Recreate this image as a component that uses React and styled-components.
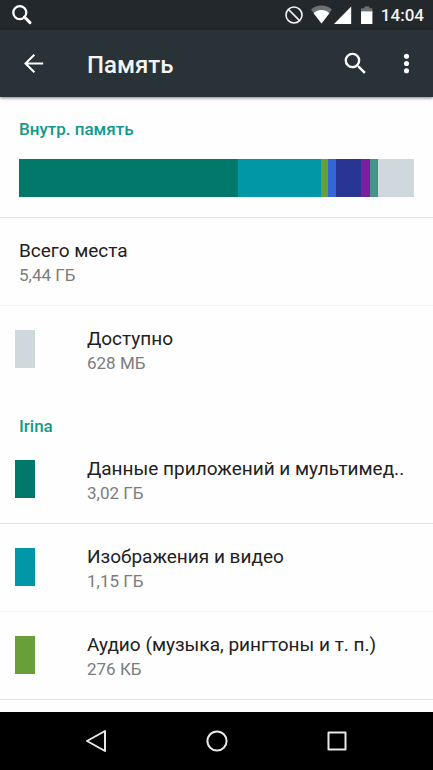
import React from "react";
import styled, { createGlobalStyle } from "styled-components";

const GlobalStyle = createGlobalStyle`
  * {
    box-sizing: border-box;
  }
  body {
    margin: 0;
    background-color: #fefefe;
    font-family: Roboto, "Noto Sans", sans-serif;
  }
`;

const Screen = styled.div`
  display: flex;
  flex-direction: column;
  height: 100vh;
  overflow: hidden;
`;

const StatusBar = styled.div`
  display: flex;
  flex: none;
  align-items: center;
  justify-content: space-between;
  height: 30px;
  padding: 0 9px 0 11px;
  background-color: #22282b;
  color: #ffffff;

  svg {
    display: block;
  }
`;

const StatusIcons = styled.div`
  display: flex;
  align-items: center;
`;

const Clock = styled.time`
  margin-left: 8px;
  font-size: 17px;
  font-weight: 500;
  line-height: 24px;
  color: #f2f2f2;
`;

const Toolbar = styled.header`
  display: flex;
  flex: none;
  align-items: center;
  height: 67px;
  padding: 0 12px 0 19px;
  background-color: #283237;
  color: #ffffff;
  box-shadow: 0 1px 3px rgba(0, 0, 0, 0.5);
  z-index: 1;
`;

const Title = styled.h1`
  flex: 1;
  margin: 0 0 0 39px;
  padding-top: 3px;
  font-size: 24px;
  font-weight: 500;
  line-height: 32px;
  color: #f4f5f5;
`;

const IconButton = styled.button`
  display: flex;
  padding: 0;
  border: none;
  background: none;
  color: inherit;
  cursor: pointer;

  & + & {
    margin-left: 22px;
  }

  svg {
    width: 29px;
    height: 29px;
    fill: currentColor;
  }
`;

const Content = styled.main`
  flex: 1;
  min-height: 0;
  overflow: hidden auto;
  scrollbar-width: none;
`;

const Category = styled.h2`
  margin: 0;
  padding: 22px 19px 0;
  font-size: 17px;
  font-weight: 500;
  line-height: 20px;
  color: #109a8c;
`;

const Usage = styled.div`
  padding: 20px 19px;
  border-bottom: 1px solid #e4e4e4;
`;

const UsageBar = styled.div`
  display: flex;
  height: 38px;
`;

const Segment = styled.div`
  flex: ${(props) => props.$size} 0 0;
  background-color: ${(props) => props.$color};
`;

const List = styled.ul`
  margin: 0;
  padding: 0;
  list-style: none;
`;

const Row = styled.li`
  display: flex;
  align-items: flex-start;
  height: 88px;
  padding: 21px 19px 0 ${(props) => (props.$swatch ? 15 : 19)}px;
  border-bottom: 1px solid
    ${(props) => ({ none: "transparent", light: "#f3f3f3" })[props.$line] || "#e4e4e4"};
`;

const Swatch = styled.div`
  flex: none;
  width: 20px;
  height: 38px;
  margin: 3px 52px 0 0;
  background-color: ${(props) => props.$color};
`;

const Name = styled.div`
  font-size: 19px;
  line-height: 24px;
  color: #212121;
  white-space: nowrap;
`;

const Size = styled.div`
  font-size: 17px;
  line-height: 24px;
  color: #7c7c7c;
`;

const NavBar = styled.nav`
  display: flex;
  flex: none;
  justify-content: center;
  height: 58px;
  background-color: #000000;
`;

const NavButton = styled.button`
  display: flex;
  align-items: center;
  justify-content: center;
  width: 120px;
  padding: 0;
  border: none;
  background: none;
  cursor: pointer;

  svg {
    fill: none;
    stroke: #e8e8e8;
    stroke-width: 2;
    stroke-linejoin: round;
  }
`;

const segments = [
  { size: 219, color: "#00796b" },
  { size: 83, color: "#0097a7" },
  { size: 7, color: "#689f38" },
  { size: 8, color: "#3367d6" },
  { size: 25, color: "#283593" },
  { size: 9, color: "#7b1fa2" },
  { size: 8, color: "#459389" },
  { size: 36, color: "#cfd8dc" },
];

const internal = [
  { name: "Всего места", size: "5,44 ГБ", line: "light" },
  { name: "Доступно", size: "628 МБ", color: "#cfd8dc", line: "none" },
];

const user = [
  { name: "Данные приложений и мультимед..", size: "3,02 ГБ", color: "#00796b" },
  { name: "Изображения и видео", size: "1,15 ГБ", color: "#0097a7", line: "light" },
  { name: "Аудио (музыка, рингтоны и т. п.)", size: "276 КБ", color: "#689f38" },
];

const StorageList = ({ items }) => (
  <List>
    {items.map((item) => (
      <Row key={item.name} $swatch={Boolean(item.color)} $line={item.line}>
        {item.color && <Swatch $color={item.color} />}
        <div>
          <Name>{item.name}</Name>
          <Size>{item.size}</Size>
        </div>
      </Row>
    ))}
  </List>
);

const App = () => {
  return (
    <Screen>
      <GlobalStyle />
      <StatusBar>
        <svg width="22" height="22" viewBox="0 0 22 22" fill="none" stroke="#fff">
          <circle cx="8.8" cy="8.6" r="6.5" strokeWidth="2.3" />
          <path d="M13.4 13l5.6 5.6" strokeWidth="3" strokeLinecap="round" />
        </svg>
        <StatusIcons>
          <svg width="88" height="20" viewBox="0 0 88 20">
            <g fill="none" stroke="#f2f2f2" strokeWidth="1.6">
              <circle cx="9" cy="10" r="8" />
              <path d="M3.4 4.4l11.2 11.2" />
            </g>
            <path d="M26 4.6a15.5 15.5 0 0 1 21 0L36.5 18.6z" fill="#6d7173" />
            <path d="M28.6 8.2a11.5 11.5 0 0 1 15.8 0L36.5 18.6z" fill="#fff" />
            <path d="M66.2 1.6V19H49z" fill="#fff" />
            <path d="M79.4 1.4h5v1.8h3V8H76V3.2h3.4z" fill="#6d7173" />
            <path d="M76 6.4h11.4V19H76z" fill="#fff" />
          </svg>
          <Clock>14:04</Clock>
        </StatusIcons>
      </StatusBar>
      <Toolbar>
        <IconButton aria-label="Назад">
          <svg viewBox="0 0 24 24">
            <path d="M20 11.2H7.4l5.9-5.9L12.1 4.1l-7.9 7.9 7.9 7.9 1.2-1.2-5.9-5.9H20z" />
          </svg>
        </IconButton>
        <Title>Память</Title>
        <IconButton aria-label="Поиск">
          <svg viewBox="0 0 24 24">
            <path d="M15.5 14h-.79l-.28-.27A6.471 6.471 0 0 0 16 9.5 6.5 6.5 0 1 0 9.5 16c1.61 0 3.09-.59 4.23-1.57l.27.28v.79l5 4.99L20.49 19l-4.99-5zm-6 0C7.01 14 5 11.99 5 9.5S7.01 5 9.5 5 14 7.01 14 9.5 11.99 14 9.5 14z" />
          </svg>
        </IconButton>
        <IconButton aria-label="Ещё">
          <svg viewBox="0 0 24 24">
            <circle cx="12" cy="6" r="2.1" />
            <circle cx="12" cy="12" r="2.1" />
            <circle cx="12" cy="18" r="2.1" />
          </svg>
        </IconButton>
      </Toolbar>
      <Content>
        <Category>Внутр. память</Category>
        <Usage>
          <UsageBar>
            {segments.map((segment) => (
              <Segment key={segment.color} $size={segment.size} $color={segment.color} />
            ))}
          </UsageBar>
        </Usage>
        <StorageList items={internal} />
        <Category>Irina</Category>
        <StorageList items={user} />
      </Content>
      <NavBar>
        <NavButton aria-label="Назад">
          <svg width="24" height="24" viewBox="0 0 24 24">
            <path d="M20 2v20L2 12z" />
          </svg>
        </NavButton>
        <NavButton aria-label="Домой">
          <svg width="24" height="24" viewBox="0 0 24 24">
            <circle cx="12" cy="12" r="9.6" />
          </svg>
        </NavButton>
        <NavButton aria-label="Обзор">
          <svg width="24" height="24" viewBox="0 0 24 24">
            <path d="M3.5 3.5h17v17h-17z" />
          </svg>
        </NavButton>
      </NavBar>
    </Screen>
  );
};
export default App;
